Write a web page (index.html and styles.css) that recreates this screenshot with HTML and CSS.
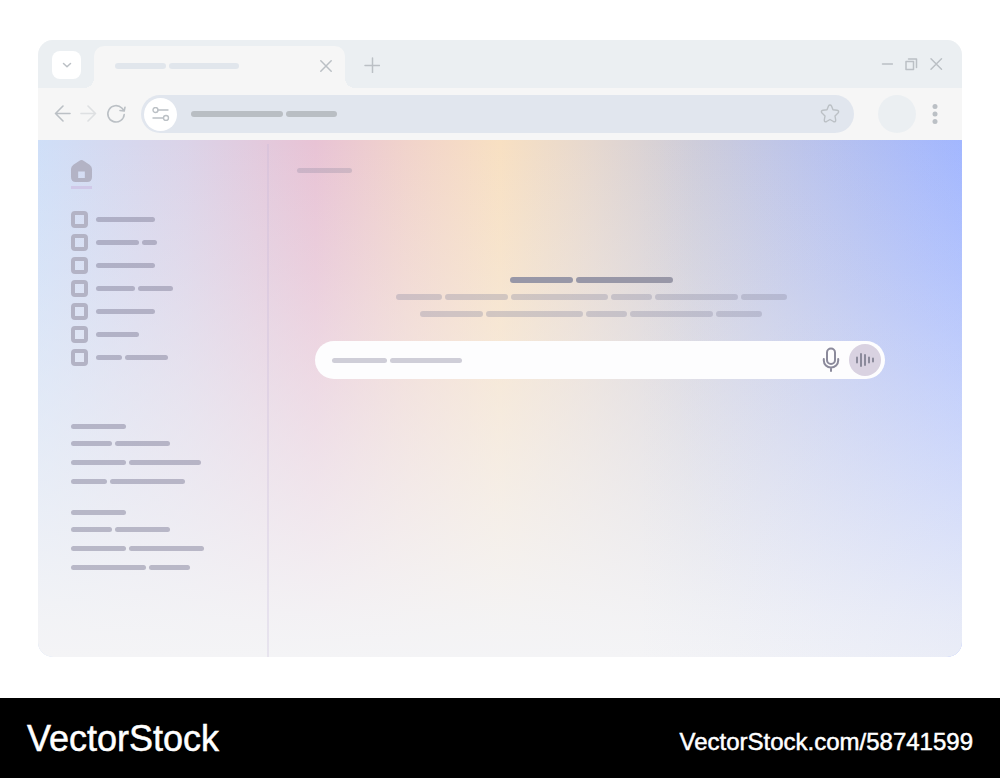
FILE: index.html
```html
<!DOCTYPE html>
<html lang="en">
<head>
    <meta charset="UTF-8">
    <meta name="viewport" content="width=device-width, initial-scale=1.0">
    <title>VectorStock</title>
    <link rel="stylesheet" href="styles.css">
</head>
<body>
    <div class="window">
        <!-- Tab strip -->
        <div class="tab-strip">
            <button class="tab-list-btn" aria-label="Search tabs">
                <svg width="10" height="10" viewBox="0 0 10 10"><path d="M1.500 3.500 5 6.800 8.500 3.500"/></svg>
            </button>
            <div class="tab">
                <div class="line light"><i class="w51"></i><i class="w70"></i></div>
                <button aria-label="Close tab">
                    <svg width="12" height="14" viewBox="0 0 12 14"><path d="M0.800 1.800 11.200 12.200M11.200 1.800 0.800 12.200"/></svg>
                </button>
            </div>
            <button class="new-tab" aria-label="New tab">
                <svg width="16" height="16" viewBox="0 0 16 16"><path d="M8.500 1V15.500M1 8.500H15.500"/></svg>
            </button>
            <div class="window-controls">
                <button aria-label="Minimize">
                    <svg width="12" height="14" viewBox="0 0 12 14"><path d="M1.500 7H11.500"/></svg>
                </button>
                <button aria-label="Restore">
                    <svg width="14" height="14" viewBox="0 0 14 14"><path d="M2 4.500H9.500V12.500H2ZM4.500 2H12.500V10.500"/></svg>
                </button>
                <button aria-label="Close">
                    <svg width="14" height="14" viewBox="0 0 14 14"><path d="M2 1.800 12.500 12.200M12.500 1.800 2 12.200"/></svg>
                </button>
            </div>
        </div>

        <!-- Toolbar -->
        <div class="toolbar">
            <div class="nav-buttons">
                <button aria-label="Back">
                    <svg width="17" height="18" viewBox="0 0 17 18"><path d="M16 8.500H1.500M9 1 1.500 8.500 9 16"/></svg>
                </button>
                <button class="faded" aria-label="Forward">
                    <svg width="17" height="18" viewBox="0 0 17 18"><path d="M1 8.500H15.500M8 1 15.500 8.500 8 16"/></svg>
                </button>
                <button aria-label="Reload">
                    <svg width="20" height="20" viewBox="0 0 20 20"><path d="M18.200 10.500A8.200 8.200 0 1 1 15.800 4L17.800 6.500M19 3.200 18.200 7 14 6.500"/></svg>
                </button>
            </div>
            <div class="address-bar">
                <button class="site-info" aria-label="Site settings">
                    <svg width="18" height="14" viewBox="0 0 18 14"><circle cx="3.500" cy="3" r="2.500"/><path d="M6 3H16M1 11H11"/><circle cx="14" cy="11" r="2.500"/></svg>
                </button>
                <div class="line url"><i class="w92"></i><i class="w51"></i></div>
                <input type="text" aria-label="Address">
                <button aria-label="Bookmark">
                    <svg width="20" height="20" viewBox="0 0 20 20"><path d="M10 1Q11 1 11.500 2L13 5.800 17 6.300Q19.700 7 18 9L15 12 15.700 16Q15.700 18.600 13.400 17.500L10 15.500 6.600 17.500Q4.300 18.600 4.300 16L5 12 2 9Q0.300 7 3 6.300L7 5.800 8.500 2Q9 1 10 1Z"/></svg>
                </button>
            </div>
            <button class="avatar" aria-label="Profile"></button>
            <button class="more" aria-label="Menu">
                <svg width="6" height="20" viewBox="0 0 6 20"><circle cx="3" cy="2.500" r="2.500"/><circle cx="3" cy="10" r="2.500"/><circle cx="3" cy="17.500" r="2.500"/></svg>
            </button>
        </div>

        <!-- Page -->
        <div class="page">
            <nav class="sidebar">
                <a href="#" class="home" aria-label="Home">
                    <svg width="21" height="22" viewBox="0 0 22 22" preserveAspectRatio="none"><path fill-rule="evenodd" d="M8.500 1Q11-0.800 13.500 1L19.500 4.800Q22 6.500 22 9V17Q22 22 17 22H5Q0 22 0 17V9Q0 6.500 2.500 4.800ZM7.500 11.500V18H14.500V11.500Z"/></svg>
                </a>
                <ul class="menu">
                    <li><a href="#"><span class="box"></span><span class="line"><i class="w59"></i></span></a></li>
                    <li><a href="#"><span class="box"></span><span class="line"><i class="w43"></i><i class="w15"></i></span></a></li>
                    <li><a href="#"><span class="box"></span><span class="line"><i class="w59"></i></span></a></li>
                    <li><a href="#"><span class="box"></span><span class="line"><i class="w39"></i><i class="w35"></i></span></a></li>
                    <li><a href="#"><span class="box"></span><span class="line"><i class="w59"></i></span></a></li>
                    <li><a href="#"><span class="box"></span><span class="line"><i class="w43"></i></span></a></li>
                    <li><a href="#"><span class="box"></span><span class="line"><i class="w26"></i><i class="w43"></i></span></a></li>
                </ul>
                <div class="history">
                    <div class="line"><i class="w55"></i></div>
                    <a href="#" class="line"><i class="w41"></i><i class="w55"></i></a>
                    <a href="#" class="line"><i class="w55"></i><i class="w72"></i></a>
                    <a href="#" class="line"><i class="w36"></i><i class="w75"></i></a>
                </div>
                <div class="history">
                    <div class="line"><i class="w55"></i></div>
                    <a href="#" class="line"><i class="w41"></i><i class="w55"></i></a>
                    <a href="#" class="line"><i class="w55"></i><i class="w75"></i></a>
                    <a href="#" class="line"><i class="w75"></i><i class="w41"></i></a>
                </div>
            </nav>
            <main class="main">
                <div class="line crumb"><i class="w55"></i></div>
                <div class="hero">
                    <div class="line dark"><i class="w63"></i><i class="w97"></i></div>
                    <div class="line soft"><i class="w46"></i><i class="w63"></i><i class="w97"></i><i class="w41"></i><i class="w83"></i><i class="w46"></i></div>
                    <div class="line soft"><i class="w63"></i><i class="w97"></i><i class="w41"></i><i class="w83"></i><i class="w46"></i></div>
                </div>
                <form class="search">
                    <div class="line"><i class="w55"></i><i class="w72"></i></div>
                    <input type="text" aria-label="Ask anything">
                    <button type="button" aria-label="Dictate">
                        <svg width="18" height="26" viewBox="0 0 18 26"><rect x="5" y="1.500" width="8" height="15.500" rx="4"/><path d="M1.800 12V13.500A7.200 7 0 0 0 16.200 13.500V12M9 20.500V24"/></svg>
                    </button>
                    <button type="button" class="voice" aria-label="Voice mode">
                        <svg width="20" height="16" viewBox="0 0 20 16"><path d="M2 5.500V10.500M6 2V14M10 3V13M14 5.500V10.500M18 6.500V9.500"/></svg>
                    </button>
                </form>
            </main>
        </div>
    </div>

    <footer class="footer">
        <span class="brand">VectorStock</span>
        <span class="link">VectorStock.com/58741599</span>
    </footer>
</body>
</html>
```
FILE: styles.css
```css
* {
    box-sizing: border-box;
}

body {
    margin: 0;
    min-height: 100vh;
    display: flex;
    flex-direction: column;
    background: #fff;
    font-family: "Liberation Sans", Arial, sans-serif;
}

button {
    display: flex;
    align-items: center;
    justify-content: center;
    padding: 0;
    border: none;
    background: none;
    cursor: pointer;
}

input {
    flex: 1;
    min-width: 0;
    border: none;
    outline: none;
    background: transparent;
}

svg {
    display: block;
    fill: none;
    stroke: #bbc0c5;
    stroke-width: 2;
    stroke-linecap: round;
    stroke-linejoin: round;
}

.window {
    flex: 1;
    display: flex;
    flex-direction: column;
    margin: 40px 38px 41px;
    border-radius: 15px;
    overflow: hidden;
    background: #f6f6f6;
}

/* Tab strip */
.tab-strip {
    display: flex;
    align-items: center;
    height: 48px;
    padding: 0 19px 0 14px;
    background: #ebeff2;
}

.tab-list-btn {
    width: 29px;
    height: 28px;
    margin-top: 2px;
    border-radius: 8px;
    background: #fff;
}

.tab {
    position: relative;
    align-self: flex-end;
    display: flex;
    align-items: center;
    justify-content: space-between;
    width: 251px;
    height: 42px;
    margin-left: 13px;
    padding: 0 13px 2px 21px;
    border-radius: 10px 10px 0 0;
    background: #f6f6f6;
}

.tab::before,
.tab::after {
    content: "";
    position: absolute;
    bottom: 0;
    width: 10px;
    height: 10px;
}

.tab::before {
    right: 100%;
    background: radial-gradient(circle at 0 0, transparent 10px, #f6f6f6 10px);
}

.tab::after {
    left: 100%;
    background: radial-gradient(circle at 100% 0, transparent 10px, #f6f6f6 10px);
}

.new-tab {
    margin: 2px 0 0 19px;
}

.window-controls {
    display: flex;
    gap: 11px;
    margin-left: auto;
}

.tab svg,
.tab-list-btn svg,
.new-tab svg,
.window-controls svg {
    stroke-width: 1.5;
}

/* Toolbar */
.toolbar {
    display: flex;
    align-items: center;
    height: 52px;
    padding: 0 24px 0 16px;
}

.nav-buttons {
    display: flex;
    align-items: center;
    gap: 9px;
    margin-right: 15px;
}

.nav-buttons svg {
    stroke-width: 1.6;
}

.faded {
    opacity: 0.4;
}

.address-bar {
    flex: 1;
    display: flex;
    align-items: center;
    height: 38px;
    padding: 0 14px 0 3px;
    border-radius: 19px;
    background: #e1e6ee;
}

.address-bar svg {
    stroke-width: 1.4;
}

.site-info {
    width: 33px;
    height: 33px;
    margin-right: 14px;
    border-radius: 50%;
    background: #fff;
}

.avatar {
    width: 38px;
    height: 38px;
    margin: 0 16px 0 24px;
    border-radius: 50%;
    background: #ebeff2;
}

.more svg {
    fill: #bbc0c5;
    stroke: none;
}

/* Placeholder text lines */
.line {
    display: flex;
    gap: 3px;
}

.line i {
    height: 5px;
    border-radius: 3px;
    background: rgba(139, 137, 160, 0.54);
}

.line.light i {
    height: 6px;
    background: #e1e6ec;
}

.line.url i {
    height: 6px;
    background: #b9bec3;
}

.line.dark i {
    height: 6px;
    background: #9897a7;
}

.line.soft i {
    height: 6px;
    background: rgba(139, 137, 160, 0.34);
}

.line.crumb i {
    background: rgba(139, 137, 160, 0.3);
}

.w15 { width: 15px; }
.w26 { width: 26px; }
.w35 { width: 35px; }
.w36 { width: 36px; }
.w39 { width: 39px; }
.w41 { width: 41px; }
.w43 { width: 43px; }
.w46 { width: 46px; }
.w51 { width: 51px; }
.w55 { width: 55px; }
.w59 { width: 59px; }
.w63 { width: 63px; }
.w70 { width: 70px; }
.w72 { width: 72px; }
.w75 { width: 75px; }
.w83 { width: 83px; }
.w92 { width: 92px; }
.w97 { width: 97px; }

/* Page */
.page {
    flex: 1;
    display: flex;
    padding-top: 4px;
    background:
        linear-gradient(to right, rgba(180, 198, 255, 0) 65%, rgba(180, 198, 255, 0.16) 100%),
        linear-gradient(to bottom, rgba(244, 244, 246, 0) 0%, rgba(244, 244, 246, 0.23) 25%, rgba(244, 244, 246, 0.5) 50%, rgba(244, 244, 246, 0.76) 75%, rgba(244, 244, 246, 0.94) 92%, #f4f4f6 100%),
        linear-gradient(to right, #cfdff8 0%, #dbd3e8 16%, #e8c3d5 30%, #f1d3cb 40%, #f8e0c2 50%, #e6d8cf 60%, #cfcdd9 71%, #b9c2ec 85%, #9fb4ff 100%);
}

.sidebar {
    width: 231px;
    padding: 16px 0 0 33px;
    border-right: 2px solid rgba(190, 180, 215, 0.25);
}

.home {
    display: block;
    width: 21px;
    padding-bottom: 4px;
    border-bottom: 3px solid #d0c8e8;
}

.home svg {
    fill: #b3b3c5;
    stroke: none;
}

.menu {
    display: flex;
    flex-direction: column;
    gap: 6px;
    margin: 22px 0 58px;
    padding: 0;
    list-style: none;
}

.menu a {
    display: flex;
    align-items: center;
    gap: 8px;
}

.box {
    width: 17px;
    height: 17px;
    border: 4px solid #b3b3c5;
    border-radius: 4px;
}

.history {
    display: flex;
    flex-direction: column;
    gap: 14px;
    margin-bottom: 26px;
}

.history div {
    margin-bottom: -2px;
}

.main {
    flex: 1;
    padding: 24px 77px 24px 28px;
}

.hero {
    display: flex;
    flex-direction: column;
    align-items: center;
    gap: 11px;
    margin: 104px 0 24px;
}

.search {
    display: flex;
    align-items: center;
    height: 38px;
    margin-left: 18px;
    padding: 0 4px 0 17px;
    border-radius: 19px;
    background: #fdfdfe;
}

.search .line i {
    background: #cfced8;
}

.search svg {
    stroke: #8b8a9b;
}

.voice {
    width: 32px;
    height: 32px;
    margin-left: 9px;
    border-radius: 50%;
    background: #d9d2e1;
}

/* Footer */
.footer {
    display: flex;
    align-items: center;
    justify-content: space-between;
    height: 80px;
    padding: 2px 27px 0;
    background: #000;
    color: #fff;
    -webkit-text-stroke: 0.5px #fff;
}

.brand {
    font-size: 36px;
}

.link {
    padding-top: 6px;
    font-size: 24px;
}
```
